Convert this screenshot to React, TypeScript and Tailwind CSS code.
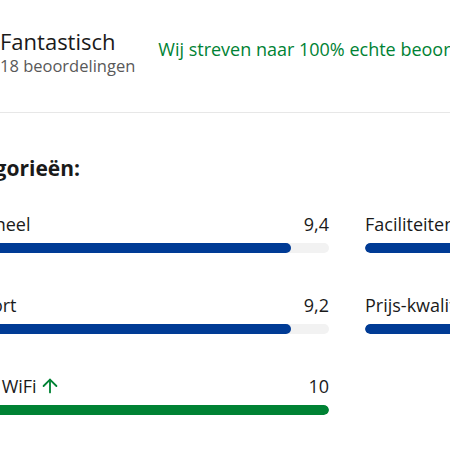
import { ArrowUp } from 'lucide-react';

type Category = {
  name: string;
  score: string;
  fill: number;
  highlight?: boolean;
};

const categories: Category[] = [
  { name: 'Personeel', score: '9,4', fill: 90 },
  { name: 'Faciliteiten', score: '9,3', fill: 90 },
  { name: 'Schoonheid', score: '9,5', fill: 92 },
  { name: 'Comfort', score: '9,2', fill: 90 },
  { name: 'Prijs-kwaliteitverhouding', score: '9,1', fill: 88 },
  { name: 'Locatie', score: '9,6', fill: 93 },
  { name: 'Gratis WiFi', score: '10', fill: 100, highlight: true },
];

function CategoryRow({ cat }: { cat: Category }) {
  return (
    <div>
      <div className="flex items-center justify-between text-[18px] leading-[24px] text-[#1a1a1a]">
        <span className="flex items-center gap-[2px] whitespace-nowrap">
          {cat.name}
          {cat.highlight && <ArrowUp className="w-[22px] h-[22px] text-[#008234]" strokeWidth={2} />}
        </span>
        <span>{cat.score}</span>
      </div>
      <div className="mt-[7px] h-[10px] rounded-full bg-[#f2f2f2] overflow-hidden">
        <div
          className={`h-full rounded-full ${cat.highlight ? 'bg-[#008234]' : 'bg-[#003b95]'}`}
          style={{ width: `${cat.fill}%` }}
        />
      </div>
    </div>
  );
}

export default function App() {
  return (
    <div
      className="w-[450px] h-[450px] overflow-hidden bg-white"
      style={{ fontFamily: '"Open Sans", "Noto Sans", sans-serif' }}
    >
      {/* Header */}
      <div className="ml-[-44px] pt-[27px] pb-[35px] flex items-center gap-[23px] border-b border-[#e7e7e7] w-[494px]">
        <div className="flex items-center gap-[8px] shrink-0">
          <div className="w-[36px] h-[36px] rounded-t-md rounded-br-md bg-[#003b95] text-white flex items-center justify-center font-bold text-[15px]">
            9,4
          </div>
          <div>
            <div className="text-[22px] leading-[28px] text-[#1a1a1a]">Fantastisch</div>
            <div className="text-[16.5px] leading-[22px] text-[#595959]">18 beoordelingen</div>
          </div>
        </div>
        <div className="text-[18px] leading-[24px] text-[#008234] whitespace-nowrap -mt-[6px]">
          Wij streven naar 100% echte beoordelingen
        </div>
      </div>

      {/* Categories */}
      <div className="ml-[-53px] pt-[41px]">
        <h3 className="text-[21px] leading-[28px] font-bold text-[#1a1a1a] whitespace-nowrap">
          Categorieën:
        </h3>
        <div className="mt-[30px] grid grid-cols-[382px_382px_382px] gap-x-[36px] gap-y-[40px]">
          {categories.map((cat) => (
            <CategoryRow key={cat.name} cat={cat} />
          ))}
        </div>
      </div>
    </div>
  );
}
